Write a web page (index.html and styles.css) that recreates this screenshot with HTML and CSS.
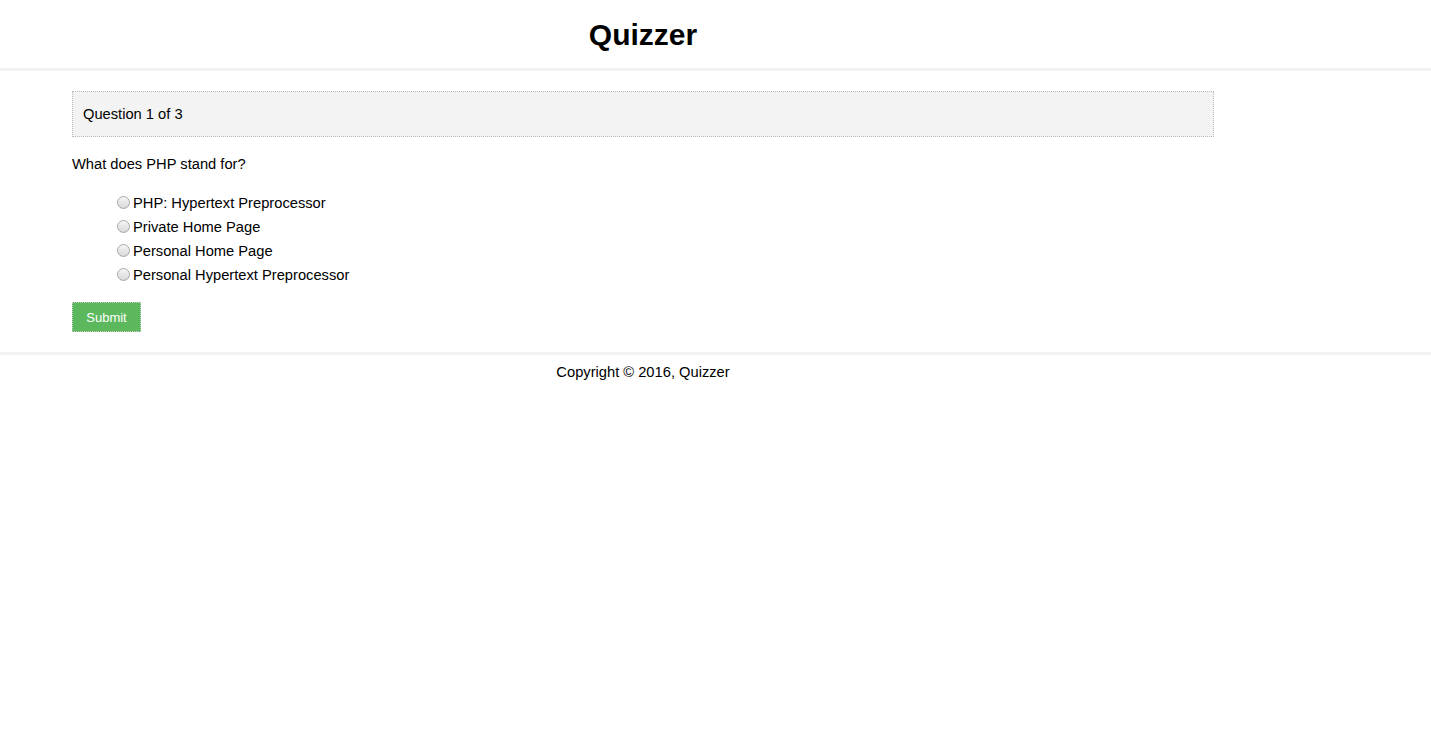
FILE: index.html
```html
<!DOCTYPE html>
<html>
<head>
<meta charset="utf-8">
<title>Quizzer</title>
<link rel="stylesheet" href="styles.css">
</head>
<body>
<header class="site-header">
  <div class="container header-inner">
    <h1 class="logo">Quizzer</h1>
  </div>
</header>
<main class="container main">
  <div class="current">Question 1 of 3</div>
  <p class="question">What does PHP stand for?</p>
  <form class="quiz-form">
    <ul class="choices">
      <li><input type="radio" name="choice" value="1">PHP: Hypertext Preprocessor</li>
      <li><input type="radio" name="choice" value="2">Private Home Page</li>
      <li><input type="radio" name="choice" value="3">Personal Home Page</li>
      <li><input type="radio" name="choice" value="4">Personal Hypertext Preprocessor</li>
    </ul>
    <button type="button" class="btn">Submit</button>
  </form>
</main>
<footer class="site-footer">
  <div class="container footer-inner">Copyright &copy; 2016, Quizzer</div>
</footer>
</body>
</html>
```
FILE: styles.css
```css
body {
  margin: 0;
  font-family: "Liberation Sans", Arial, sans-serif;
  font-size: 14.7px;
  line-height: 24px;
  color: #000;
  background: #fff;
}
.container {
  width: 1142px;
  margin-left: 72px;
}
.site-header {
  border-bottom: 3px solid #f2f2f2;
}
.header-inner {
  height: 68px;
  display: flex;
  align-items: center;
  justify-content: center;
}
.logo {
  margin: 0;
  font-size: 30px;
  line-height: 36px;
  font-weight: bold;
  position: relative;
  top: 1px;
}
.main {
  padding-top: 20px;
  padding-bottom: 20px;
}
.current {
  border: 1px dotted #bbb;
  background: #f3f3f3;
  padding: 10px 10px;
}
.question {
  margin: 15px 0 15px;
}
.choices {
  list-style: none;
  margin: 0 0 15px;
  padding-left: 40px;
}
.choices li {
  height: 24px;
  display: flex;
  align-items: center;
}
.choices input {
  -webkit-appearance: none;
  appearance: none;
  margin: 0 3px 0 5px;
  width: 13px;
  height: 13px;
  border-radius: 50%;
  border: 1px solid #a9a9a9;
  background: linear-gradient(#f4f4f4, #d8d8d8);
  box-sizing: border-box;
  position: relative;
  top: -1px;
}
.btn {
  display: block;
  background: #5cb85c;
  color: #fff;
  border: 1px dotted #ccc;
  font-family: "Liberation Sans", Arial, sans-serif;
  font-size: 13px;
  width: 69px;
  height: 30px;
  padding: 0;
  cursor: pointer;
}
.site-footer {
  border-top: 3px solid #f2f2f2;
}
.footer-inner {
  text-align: center;
  padding-top: 5px;
}
```
